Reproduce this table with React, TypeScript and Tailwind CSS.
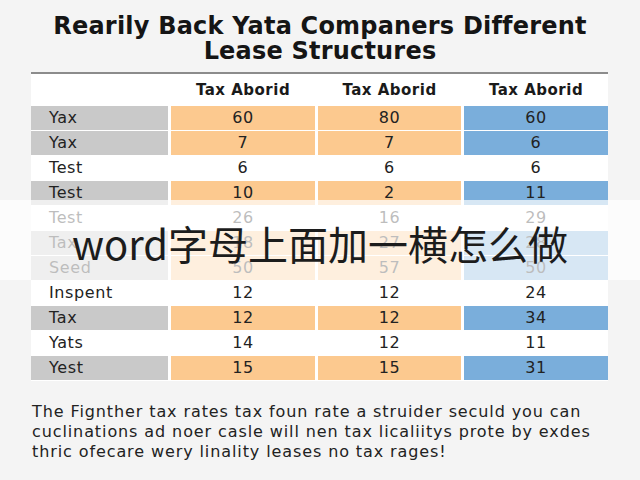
import React from "react";

type Row = { label: string; v: [string, string, string]; colored: boolean };

const rows: Row[] = [
  { label: "Yax", v: ["60", "80", "60"], colored: true },
  { label: "Yax", v: ["7", "7", "6"], colored: true },
  { label: "Test", v: ["6", "6", "6"], colored: false },
  { label: "Test", v: ["10", "2", "11"], colored: true },
  { label: "Test", v: ["26", "16", "29"], colored: false },
  { label: "Tax", v: ["18", "27", "28"], colored: true },
  { label: "Seed", v: ["50", "57", "50"], colored: true },
  { label: "Inspent", v: ["12", "12", "24"], colored: false },
  { label: "Tax", v: ["12", "12", "34"], colored: true },
  { label: "Yats", v: ["14", "12", "11"], colored: false },
  { label: "Yest", v: ["15", "15", "31"], colored: true },
];

export default function App() {
  return (
    <div className="relative w-[640px] h-[480px] overflow-hidden bg-[#f4f4f4] font-['DejaVu_Sans',sans-serif] text-[#222]">
      <h1 className="pt-[14px] text-center text-[24px] leading-[25px] font-bold tracking-[0.2px] text-[#151515]">
        Rearily Back Yata Companers Different
        <br />
        Lease Structures
      </h1>
      <div className="ml-[31px] mt-[8px] w-[577px] border-t-2 border-[#8c8c8c] bg-white">
        <div className="grid grid-cols-[137px_144px_143px_144px] gap-x-[3px]">
          <div className="h-[32px]" />
          {[0, 1, 2].map((i) => (
            <div
              key={i}
              className="flex h-[32px] items-center justify-center text-[15px] font-bold tracking-[0.5px] text-[#1a1a1a]"
            >
              Tax Aborid
            </div>
          ))}
        </div>
        <div className="flex flex-col gap-y-[2px]">
          {rows.map((r, idx) => (
            <div
              key={idx}
              className="grid h-[23px] grid-cols-[137px_144px_143px_144px] gap-x-[3px] text-[16px] tracking-[0.6px]"
            >
              <div
                className={`flex items-center pl-[18px] ${r.colored ? "bg-[#c9c9c9]" : "bg-white"}`}
              >
                {r.label}
              </div>
              <div
                className={`flex items-center justify-center ${r.colored ? "bg-[#fcc98f]" : "bg-white"}`}
              >
                {r.v[0]}
              </div>
              <div
                className={`flex items-center justify-center ${r.colored ? "bg-[#fcc98f]" : "bg-white"}`}
              >
                {r.v[1]}
              </div>
              <div
                className={`flex items-center justify-center ${r.colored ? "bg-[#7aaedb]" : "bg-white"}`}
              >
                {r.v[2]}
              </div>
            </div>
          ))}
        </div>
        <div className="h-[2px]" />
      </div>
      <p className="ml-[32px] mt-[21px] whitespace-nowrap text-[16px] leading-[20px] tracking-[0.9px] text-[#222]">
        The Fignther tax rates tax foun rate a struider seculd you can
        <br />
        cuclinations ad noer casle will nen tax licaliitys prote by exdes
        <br />
        thric ofecare wery linality leases no tax rages!
      </p>
      <div className="absolute left-0 top-[200px] flex h-[80px] w-[640px] items-center justify-center bg-white/70 pt-[6px]">
        <span className="text-[40px] leading-[48px] text-[#1c1c1c] font-['Noto_Sans_CJK_SC','Noto_Sans',sans-serif]">
          word字母上面加一横怎么做
        </span>
      </div>
    </div>
  );
}
